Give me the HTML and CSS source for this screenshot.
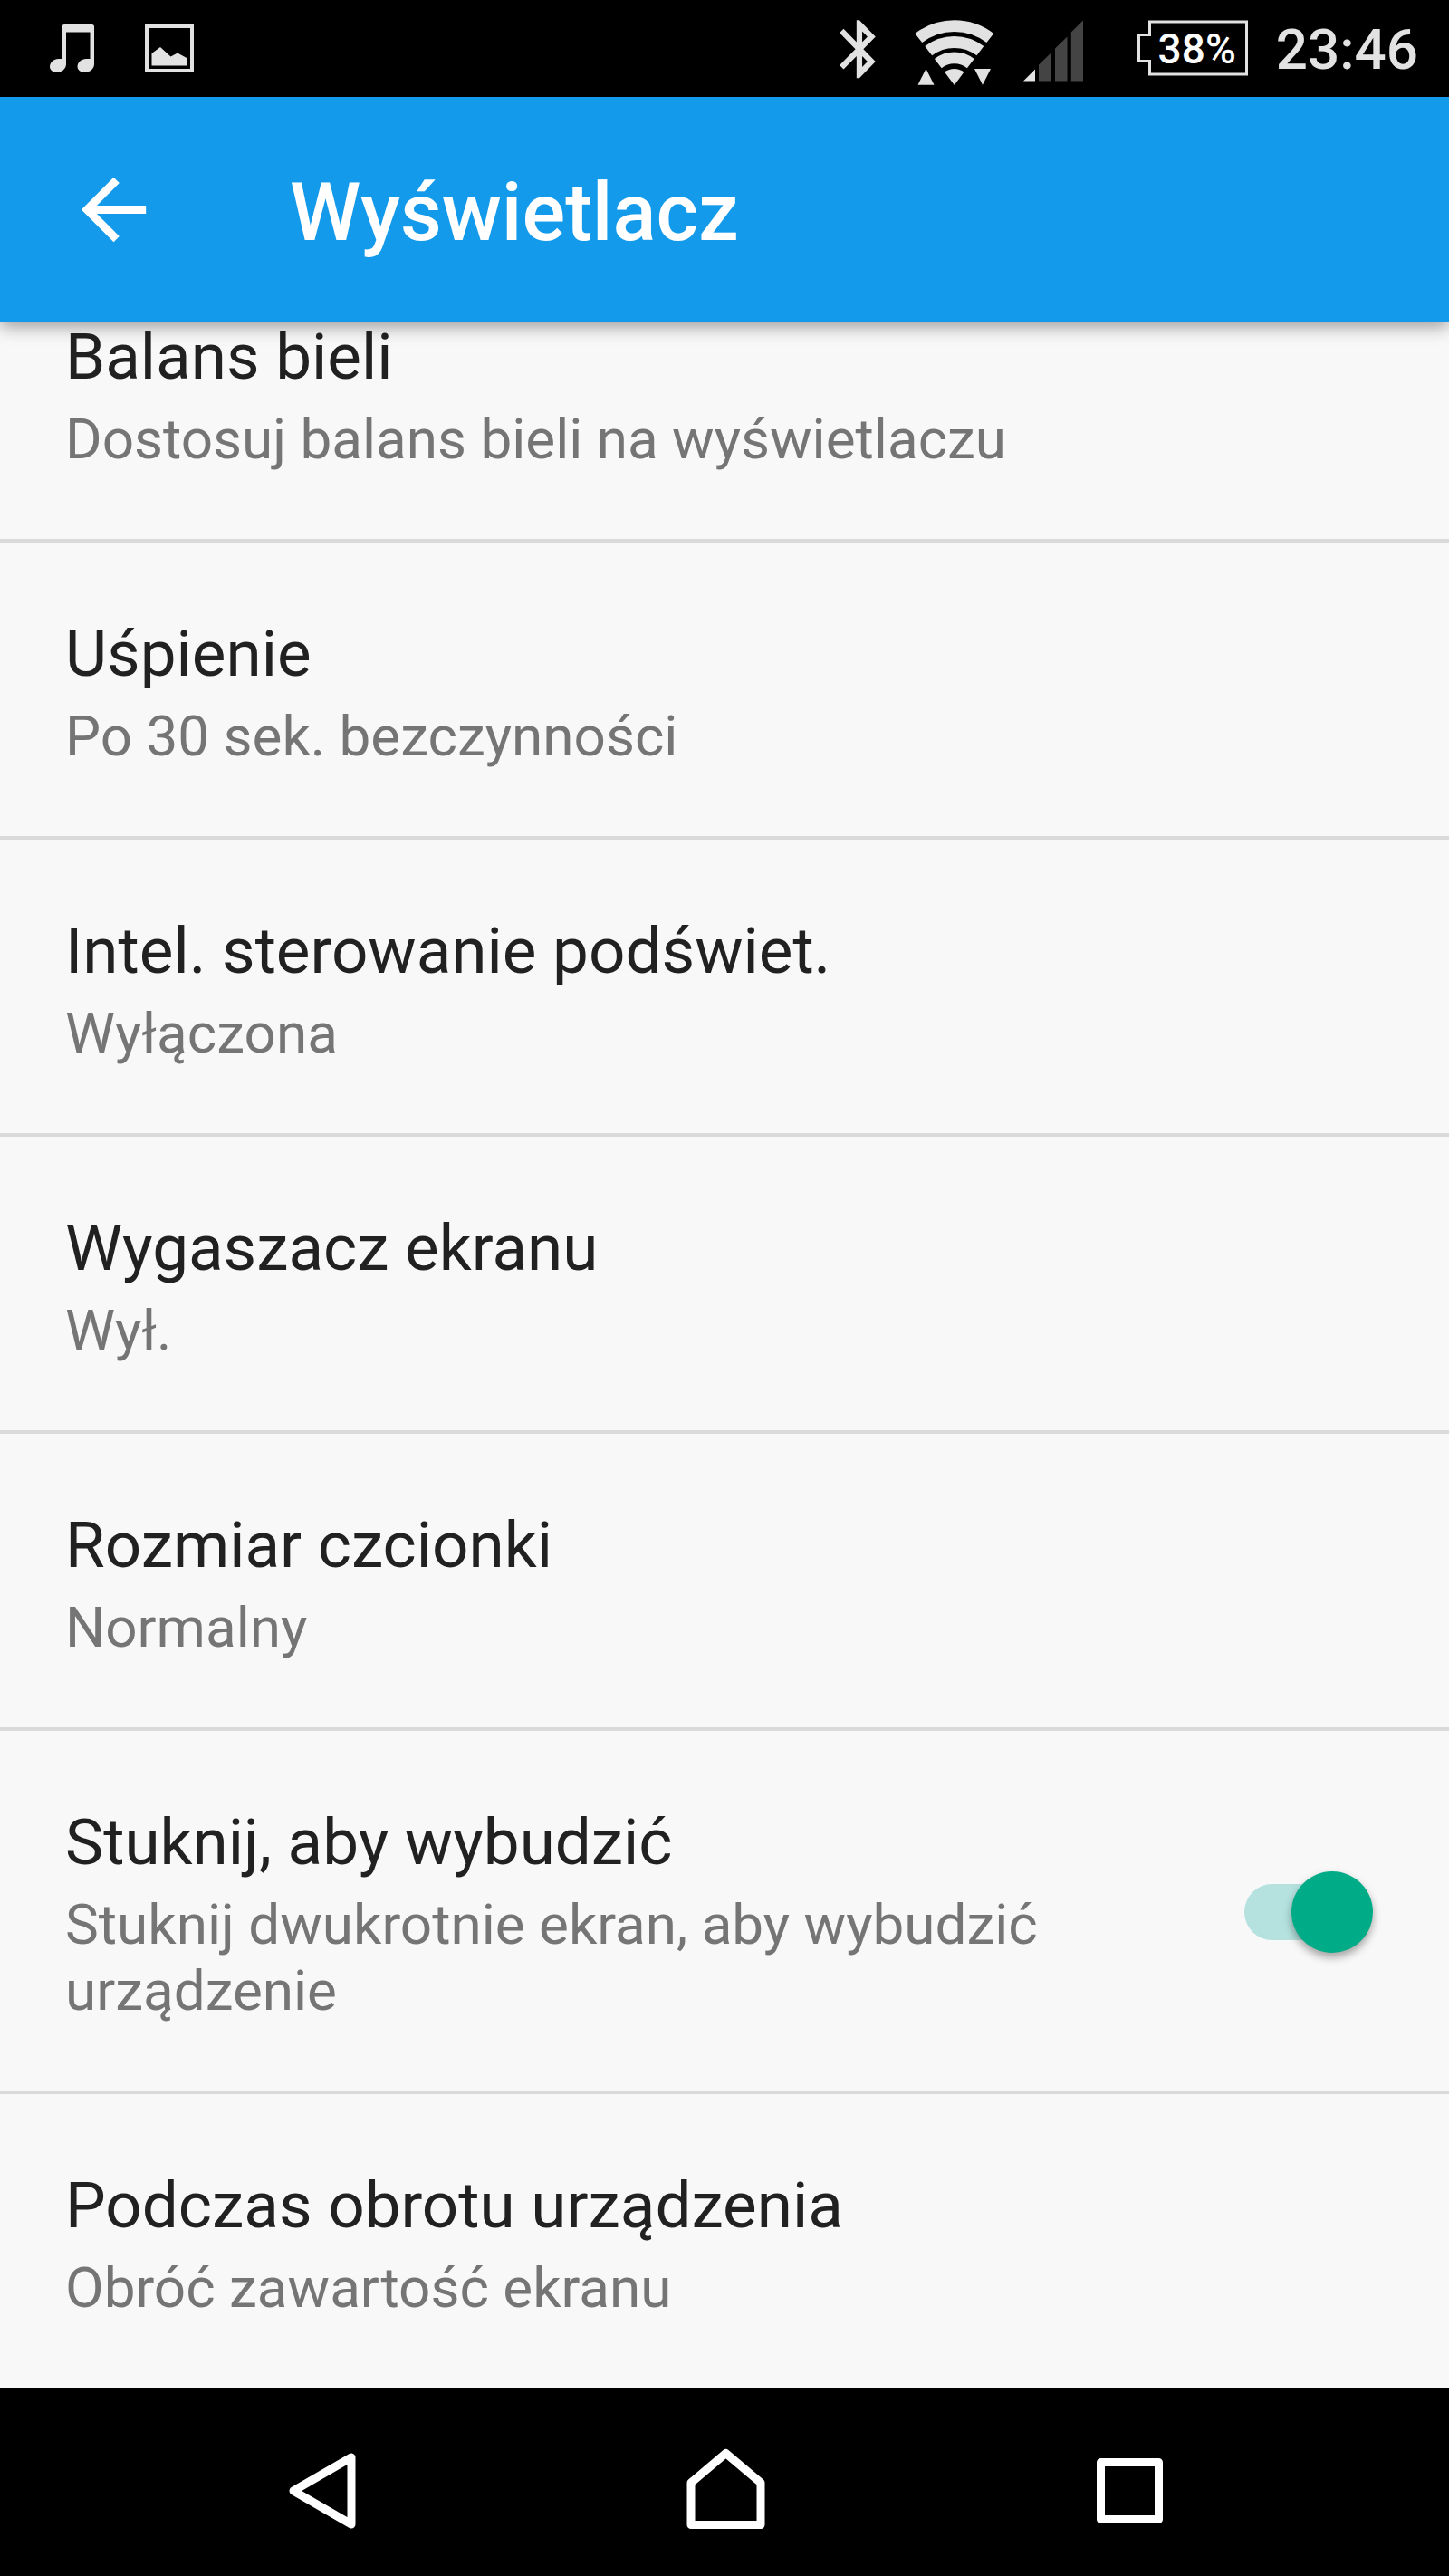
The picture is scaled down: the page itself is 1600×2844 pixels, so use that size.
FILE: index.html
```html
<!DOCTYPE html>
<html lang="pl">
<head>
    <meta charset="UTF-8">
    <meta name="viewport" content="width=device-width, initial-scale=1.0">
    <title>Wyświetlacz</title>
    <link rel="stylesheet" href="styles.css">
</head>
<body>
    <div class="status-bar">
        <div class="status-group notifications">
            <svg width="60" height="107" viewBox="50 0 60 107" fill="#e2e2e2">
                <path d="M71 27H101.500Q104 27 104 29.500V71C104 76 99 80 93.500 80C88.500 80 85.500 77 85.500 73.500C85.500 69 90 65 95 65H99.500V35.500H73V71C73 76 68 80 62.500 80C58 80 55 77 55 73.500C55 69 59.500 65 64.500 65H68.500V29.500Q68.500 27 71 27Z"/>
            </svg>
            <svg width="60" height="107" viewBox="157 0 60 107" fill="#e2e2e2">
                <rect x="162" y="29" width="50" height="49" fill="none" stroke="#e2e2e2" stroke-width="4"/>
                <path d="M167.500 59L177 52L188.500 62.500L196 58.500L207 64.500V72.500H167.500Z"/>
            </svg>
        </div>
        <div class="status-group">
            <svg width="70" height="107" viewBox="916 0 70 107" fill="#e2e2e2">
                <path transform="translate(913.500 15.800) scale(3.120 3.200)" d="M17.710 7.710L12 2h-1v7.590L6.410 5 5 6.410 10.590 12 5 17.590 6.410 19 11 14.410V22h1l5.710-5.710-4.300-4.290 4.300-4.290zM13 5.830l1.880 1.880L13 9.590V5.830zm1.880 10.460L13 18.170v-3.760l1.880 1.880z"/>
            </svg>
            <svg width="100" height="107" viewBox="1004 0 100 107" fill="#e2e2e2">
                <g fill="none" stroke="#e2e2e2" stroke-width="12.800">
                    <path d="M1014.300 42A65 65 0 0 1 1093.300 42"/>
                    <path d="M1025.200 56.200A47 47 0 0 1 1082.400 56.200"/>
                    <path d="M1035.800 70.100A29.500 29.500 0 0 1 1071.800 70.100"/>
                </g>
                <path d="M1053.800 94L1043 79.600A17.500 17.500 0 0 1 1064.500 79.600Z"/>
                <path d="M1022.500 76L1031.500 93.700H1013.500ZM1076 76H1094L1085 93.700Z"/>
            </svg>
            <svg width="76" height="107" viewBox="1124 0 76 107" fill="#444">
                <path d="M1130 89.500L1143 76.500V89.500Z" fill="#e2e2e2"/>
                <path d="M1147 89.500V71.500L1160.500 58.500V89.500ZM1165 89.500V53.500L1178.500 40.500V89.500ZM1182.800 89.500V35.500L1196 22.500V89.500Z"/>
            </svg>
            <div class="battery">
                <svg width="124" height="107" viewBox="1255 0 124 107">
                    <path d="M1269.500 24H1376.500V82H1269.500V67.500H1257.500V38.500H1269.500Z" fill="none" stroke="#e2e2e2" stroke-width="3"/>
                </svg>
                <span class="battery-level">38%</span>
            </div>
            <span class="clock">23:46</span>
        </div>
    </div>

    <header class="toolbar">
        <button type="button" class="back" aria-label="Wstecz">
            <svg width="107" height="107" viewBox="0 0 24 24" fill="#fff">
                <path d="M20 11H7.830l5.590-5.590L12 4l-8 8 8 8 1.410-1.410L7.830 13H20v-2z"/>
            </svg>
        </button>
        <h1>Wyświetlacz</h1>
    </header>

    <main>
        <ul class="settings">
            <li>
                <div class="item-title">Balans bieli</div>
                <div class="item-summary">Dostosuj balans bieli na wyświetlaczu</div>
            </li>
            <li>
                <div class="item-title">Uśpienie</div>
                <div class="item-summary">Po 30 sek. bezczynności</div>
            </li>
            <li>
                <div class="item-title">Intel. sterowanie podświet.</div>
                <div class="item-summary">Wyłączona</div>
            </li>
            <li>
                <div class="item-title">Wygaszacz ekranu</div>
                <div class="item-summary">Wył.</div>
            </li>
            <li>
                <div class="item-title">Rozmiar czcionki</div>
                <div class="item-summary">Normalny</div>
            </li>
            <li class="with-switch">
                <label for="tapToWake">
                    <span class="item-title">Stuknij, aby wybudzić</span>
                    <span class="item-summary">Stuknij dwukrotnie ekran, aby wybudzić urządzenie</span>
                </label>
                <input type="checkbox" id="tapToWake" class="switch" checked>
            </li>
            <li>
                <div class="item-title">Podczas obrotu urządzenia</div>
                <div class="item-summary">Obróć zawartość ekranu</div>
            </li>
        </ul>
    </main>

    <nav class="nav-bar">
        <button type="button" aria-label="Wstecz">
            <svg width="100" height="100" viewBox="0 0 100 100">
                <path d="M22 50L86 13V87Z"/>
            </svg>
        </button>
        <button type="button" aria-label="Ekran główny">
            <svg width="100" height="100" viewBox="0 0 100 100">
                <path d="M13 41L51.500 8.500L90 41V87.500H13Z"/>
            </svg>
        </button>
        <button type="button" aria-label="Ostatnie aplikacje">
            <svg width="100" height="100" viewBox="0 0 100 100">
                <path d="M17.500 18.500H81.500V81.500H17.500Z"/>
            </svg>
        </button>
    </nav>
</body>
</html>
```

FILE: styles.css
```css
* {
    box-sizing: border-box;
}
body {
    font-family: Roboto, sans-serif;
    margin: 0;
    min-height: 100vh;
    display: flex;
    flex-direction: column;
    background: #f8f8f8;
    color: #212121;
}
svg {
    display: block;
}
button {
    background: none;
    border: none;
    padding: 0;
    cursor: pointer;
}
.status-bar {
    display: flex;
    justify-content: space-between;
    height: 107px;
    padding: 0 34px 0 50px;
    background: #000;
    color: #e2e2e2;
}
.status-group {
    display: flex;
    align-items: center;
    gap: 20px;
}
.notifications {
    gap: 47px;
}
.battery {
    display: grid;
    align-items: center;
    margin-left: 35px;
}
.battery svg,
.battery-level {
    grid-area: 1 / 1;
}
.battery-level {
    padding-left: 10px;
    text-align: center;
    color: #fff;
    font-size: 46px;
    font-weight: 500;
}
.clock {
    margin-left: 10px;
    padding-top: 3px;
    font-size: 62px;
    font-weight: 500;
    line-height: 72px;
}
.toolbar {
    display: flex;
    align-items: center;
    gap: 141px;
    height: 249px;
    padding: 0 72px;
    background: #149aea;
    box-shadow: 0 4px 18px rgba(0, 0, 0, 0.4);
    z-index: 1;
}
.toolbar h1 {
    margin: 0;
    padding-top: 6px;
    color: #fff;
    font-size: 89px;
    font-weight: 500;
    line-height: 104px;
}
main {
    flex: 1;
}
.settings {
    list-style: none;
    margin: 0;
    padding: 0;
}
.settings li {
    padding: 85px 84px 74px 72px;
    border-bottom: 4px solid #dadada;
}
/* top row sits right under the toolbar */
.settings li:first-child {
    padding-top: 0;
}
.settings li:last-child {
    border-bottom: none;
}
.item-title {
    display: block;
    margin-bottom: 16px;
    font-size: 71px;
    line-height: 76px;
}
.item-summary {
    display: block;
    color: #757575;
    font-size: 62px;
    line-height: 73px;
}
.settings .with-switch {
    display: grid;
    grid-template-columns: 1fr auto;
    align-items: center;
    gap: 71px;
    padding-top: 81px;
    padding-bottom: 78px;
}
.with-switch label {
    padding-top: 4px;
    margin-bottom: -4px;
}
.switch {
    appearance: none;
    position: relative;
    width: 142px;
    height: 90px;
    margin: 0;
    cursor: pointer;
}
.switch::before {
    content: "";
    position: absolute;
    top: 14px;
    left: 0;
    width: 120px;
    height: 62px;
    border-radius: 31px;
    background: #cfcfcf;
}
.switch::after {
    content: "";
    position: absolute;
    top: 0;
    left: 0;
    width: 90px;
    height: 90px;
    border-radius: 50%;
    background: #f1f1f1;
    box-shadow: 0 5px 10px rgba(0, 0, 0, 0.35);
}
.switch:checked::before {
    background: #b5e2df;
}
.switch:checked::after {
    left: auto;
    right: 0;
    background: #00ab87;
}
.nav-bar {
    display: flex;
    justify-content: center;
    height: 208px;
    padding-top: 20px;
    background: #000;
}
.nav-bar button {
    display: flex;
    align-items: center;
    justify-content: center;
    width: 28%;
}
.nav-bar path {
    fill: none;
    stroke: #fff;
    stroke-width: 9;
    stroke-linejoin: round;
}
```
